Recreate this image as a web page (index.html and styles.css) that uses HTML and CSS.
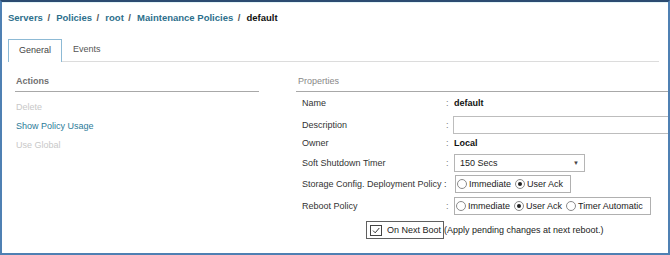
FILE: index.html
```html
<!DOCTYPE html>
<html lang="en">
<head>
  <meta charset="UTF-8" />
  <title>Maintenance Policies - default</title>
  <link rel="stylesheet" href="styles.css">
</head>
<body>
  <div class="window">
    <div class="crumbs">
      <a class="crumb">Servers</a><span class="sep">/</span>
      <a class="crumb">Policies</a><span class="sep">/</span>
      <a class="crumb">root</a><span class="sep">/</span>
      <a class="crumb">Maintenance Policies</a><span class="sep">/</span>
      <span class="crumb current">default</span>
    </div>

    <div class="tabs">
      <div class="tab active">General</div>
      <div class="tab">Events</div>
      <div class="tab-rest"></div>
    </div>

    <div class="panels">
      <div class="actions">
        <div class="panel-title bold">Actions</div>
        <ul class="action-list">
          <li class="disabled">Delete</li>
          <li class="link">Show Policy Usage</li>
          <li class="disabled">Use Global</li>
        </ul>
      </div>

      <div class="props">
        <div class="panel-title">Properties</div>

        <div class="row r-name">
          <span class="label">Name</span><span class="colon">:</span>
          <span class="value">default</span>
        </div>
        <div class="row r-desc">
          <span class="label">Description</span><span class="colon">:</span>
          <input class="text-input" type="text">
        </div>
        <div class="row r-owner">
          <span class="label">Owner</span><span class="colon">:</span>
          <span class="value">Local</span>
        </div>
        <div class="row r-timer">
          <span class="label">Soft Shutdown Timer</span><span class="colon">:</span>
          <div class="select"><span>150 Secs</span><span class="arrow">&#9660;</span></div>
        </div>
        <div class="row r-storage">
          <span class="label tight">Storage Config. Deployment Policy :</span>
          <div class="radio-group">
            <span class="radio"></span><span class="opt">Immediate</span>
            <span class="radio on"></span><span class="opt">User Ack</span>
          </div>
        </div>
        <div class="row r-reboot">
          <span class="label">Reboot Policy</span><span class="colon">:</span>
          <div class="radio-group">
            <span class="radio"></span><span class="opt">Immediate</span>
            <span class="radio on"></span><span class="opt">User Ack</span>
            <span class="radio"></span><span class="opt">Timer Automatic</span>
          </div>
        </div>
        <div class="row r-boot">
          <div class="check-box">
            <span class="check">
              <svg width="10" height="9" viewBox="0 0 10 9"><path d="M2 4.6 L4.2 6.8 L8.3 2" fill="none" stroke="#333" stroke-width="1"/></svg>
            </span>
            <span>On Next Boot</span>
          </div>
          <span class="hint">(Apply pending changes at next reboot.)</span>
        </div>
      </div>
    </div>
  </div>
</body>
</html>
```

FILE: styles.css
```css
* { margin: 0; padding: 0; box-sizing: border-box; }
html, body {
  background: #fff;
  font-family: 'Liberation Sans', Arial, sans-serif;
  font-size: 9px;
  color: #333;
}
.window {
  width: 670px;
  height: 255px;
  border: 2px solid #4f80b3;
  border-top-color: #2c4b71;
  box-shadow: inset 0 1px 0 #e3f4f8;
  overflow: hidden;
}
.crumbs {
  padding: 9px 0 0 6px;
  font-size: 9.5px;
  font-weight: bold;
  line-height: 14px;
  white-space: nowrap;
}
.crumb { color: #2d6f8c; }
.crumb.current { color: #111; }
.sep { color: #555; padding: 0 3.5px 0 4.5px; }

.tabs {
  display: flex;
  margin: 14px 9px 0 6px;
  height: 23px;
}
.tab {
  height: 23px;
  line-height: 21px;
  padding: 0 11px;
  color: #555;
  border-bottom: 1px solid #dcdcdc;
}
.tab.active {
  width: 54px;
  text-align: center;
  padding: 0;
  border: 1px solid #8dbad5;
  border-bottom: none;
  color: #444;
}
.tab-rest {
  flex: 1;
  border-bottom: 1px solid #dcdcdc;
}

.panels {
  display: flex;
  margin-left: 13px;
}
.actions {
  width: 244px;
  flex-shrink: 0;
}
.props {
  width: 400px;
  margin-left: 37px;
  flex-shrink: 0;
}
.panel-title {
  margin-top: 13px;
  line-height: 12px;
  padding: 0 0 4px 2px;
  color: #888;
  border-bottom: 1px solid #a8a8a8;
}
.panel-title.bold {
  padding-left: 1px;
  font-weight: bold;
  color: #707070;
}
.action-list {
  list-style: none;
  padding: 6px 0 0 1px;
}
.action-list li { line-height: 19px; }
.action-list .disabled { color: #c8c8c8; }
.action-list .link { color: #2b7b99; }

.row {
  display: flex;
  align-items: center;
  padding-left: 6px;
  white-space: nowrap;
}
.row > * { flex-shrink: 0; }
.r-name { margin-top: 1px; height: 20px; }
.r-desc { height: 24px; }
.r-owner { height: 12px; }
.r-timer { height: 28px; }
.r-storage { height: 14px; }
.r-reboot { height: 30px; }
.r-boot { height: 18px; padding-left: 70px; }

.label {
  width: 144px;
  color: #333;
}
.label.tight { width: 152px; }
.colon {
  width: 7px;
  color: #777;
}
.value {
  font-weight: bold;
  color: #111;
  padding-left: 1px;
}
.text-input {
  width: 225px;
  height: 18px;
  border: 1px solid #bdbdbd;
}
.select {
  display: flex;
  justify-content: space-between;
  align-items: center;
  width: 131px;
  height: 18px;
  margin-left: 1px;
  padding: 0 5px;
  border: 1px solid #b5b5b5;
  color: #222;
}
.select .arrow { font-size: 6px; color: #444; }

.radio-group {
  display: flex;
  align-items: center;
  height: 18px;
  margin-left: 1px;
  padding: 0 7px 0 1px;
  border: 1px solid #b0b0b0;
  color: #222;
}
.radio {
  width: 10px;
  height: 10px;
  border: 1px solid #8a8a8a;
  border-radius: 50%;
  margin-right: 2px;
  display: flex;
  align-items: center;
  justify-content: center;
}
.radio.on::after {
  content: "";
  width: 4px;
  height: 4px;
  border-radius: 50%;
  background: #222;
}
.opt { margin-right: 4px; }
.opt:last-child { margin-right: 0; }

.check-box {
  display: flex;
  align-items: center;
  width: 78px;
  height: 18px;
  padding-left: 3px;
  border: 1px solid #606060;
  color: #222;
}
.check {
  width: 12px;
  height: 11px;
  border: 1px solid #444;
  margin-right: 5px;
  display: flex;
  align-items: center;
  justify-content: center;
}
.check svg { display: block; }
.hint { color: #222; }
```
